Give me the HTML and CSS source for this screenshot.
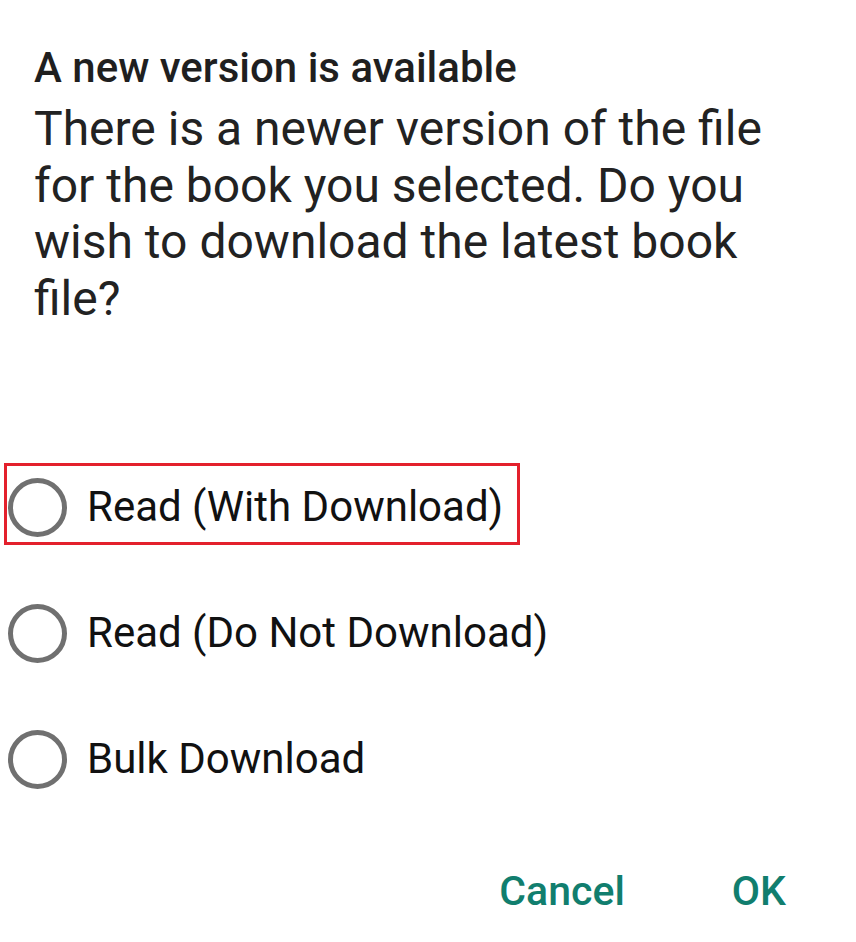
FILE: index.html
```html
<!DOCTYPE html>
<html lang="en">
<head>
  <meta charset="UTF-8">
  <title>A new version is available</title>
  <link rel="stylesheet" href="styles.css">
</head>
<body>
  <div class="dialog">
    <h2 class="title">A new version is available</h2>
    <p class="message">There is a newer version of the file for the book you selected. Do you wish to download the latest book file?</p>

    <!-- Options -->
    <div class="options">
      <label class="option">
        <span class="option-box highlight">
          <span class="radio"></span>
          <span class="option-label">Read (With Download)</span>
        </span>
      </label>
      <label class="option">
        <span class="option-box">
          <span class="radio"></span>
          <span class="option-label">Read (Do Not Download)</span>
        </span>
      </label>
      <label class="option">
        <span class="option-box">
          <span class="radio"></span>
          <span class="option-label">Bulk Download</span>
        </span>
      </label>
    </div>

    <div class="actions">
      <button class="btn">Cancel</button>
      <button class="btn">OK</button>
    </div>
  </div>
</body>
</html>
```

FILE: styles.css
```css
body {
  margin: 0;
  background: #fff;
  font-family: Roboto, "Liberation Sans", sans-serif;
  color: #212121;
}
.dialog {
  padding-top: 43px;
}
.title {
  margin: 0 0 8px;
  padding: 0 34px;
  font-size: 42px;
  line-height: 50px;
  font-weight: 500;
  color: #1f1f1f;
}
.message {
  margin: 0;
  padding: 0 34px;
  max-width: 750px;
  font-size: 48px;
  line-height: 56.5px;
  color: #222;
}
.options {
  margin-top: 114px;
  padding-left: 4px;
}
.option {
  display: flex;
  align-items: center;
  height: 126px;
}
.option-box {
  display: inline-flex;
  align-items: center;
  box-sizing: border-box;
  height: 82px;
  padding: 6px 14px 0 1px;
  border: 3px solid transparent;
}
.option-box.highlight {
  border-color: #e3202c;
}
.radio {
  width: 59px;
  height: 59px;
  box-sizing: border-box;
  border: 5px solid #707070;
  border-radius: 50%;
  margin-right: 20px;
  flex-shrink: 0;
}
.option-label {
  font-size: 42px;
  line-height: 50px;
  color: #111;
}
.actions {
  display: flex;
  justify-content: flex-end;
  gap: 107px;
  margin-top: 47px;
  padding-right: 70px;
}
.btn {
  border: none;
  background: none;
  padding: 0;
  font-family: Roboto, "Liberation Sans", sans-serif;
  font-size: 41px;
  line-height: 50px;
  font-weight: 500;
  color: #117e6e;
  cursor: pointer;
}
```
